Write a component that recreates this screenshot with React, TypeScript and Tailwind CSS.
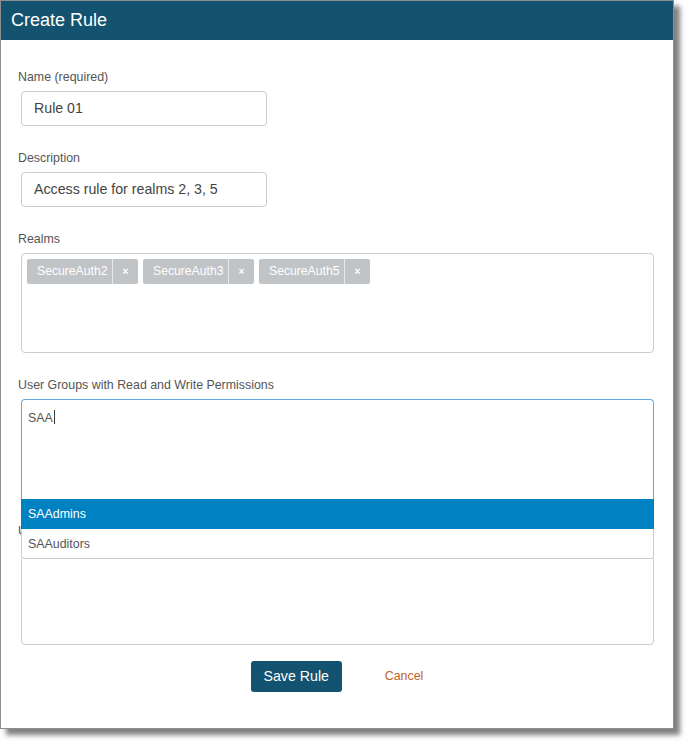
import React from 'react';

const font = { fontFamily: '"Liberation Sans", Arial, sans-serif' };

const Label: React.FC<{ text: string }> = ({ text }) => (
  <div className="h-4 pl-[17px] text-[12.4px] leading-[18px] text-[#555]">{text}</div>
);

const Tag: React.FC<{ name: string }> = ({ name }) => (
  <div className="flex h-[25px] rounded-[2px] bg-[#c0c4c7] text-white">
    <span className="flex w-[85px] items-center pl-[10px] text-[12.2px]">{name}</span>
    <span className="w-px bg-[#e6e8ea]" />
    <span className="flex w-[25px] items-center justify-center text-[10px] font-bold">×</span>
  </div>
);

export default function App() {
  return (
    <div className="h-[744px] w-[689px] bg-white" style={font}>
      <div className="flex h-[729px] w-[674px] flex-col border border-[#8f8f8f] bg-white shadow-[6px_6px_5px_rgba(0,0,0,0.5)]">
        {/* Header */}
        <div className="flex h-[39px] items-center bg-[#13536f] pl-[10px] text-[18px] text-white">
          Create Rule
        </div>

        <div className="flex flex-col pt-[28px]">
          <Label text="Name (required)" />
          <div className="ml-[20px] mt-[7px] flex h-[35px] w-[246px] items-center rounded-[4px] border border-[#ccc] pl-[12px] text-[14.2px] text-[#444]">
            Rule 01
          </div>

          <div className="mt-[23px]">
            <Label text="Description" />
          </div>
          <div className="ml-[20px] mt-[7px] flex h-[35px] w-[246px] items-center rounded-[4px] border border-[#ccc] pl-[12px] text-[14.2px] text-[#444]">
            Access rule for realms 2, 3, 5
          </div>

          <div className="mt-[23px]">
            <Label text="Realms" />
          </div>
          <div className="ml-[20px] mt-[7px] flex h-[100px] w-[633px] items-start gap-[5px] rounded-[4px] border border-[#ccc] p-[5px]">
            <Tag name="SecureAuth2" />
            <Tag name="SecureAuth3" />
            <Tag name="SecureAuth5" />
          </div>

          <div className="mt-[23px]">
            <Label text="User Groups with Read and Write Permissions" />
          </div>
          <div className="relative ml-[20px] mt-[7px] w-[633px]">
            <div className="h-[100px] rounded-t-[4px] border border-b-0 border-[#66a9e0] px-[6px] pt-[8px] text-[12.4px] text-[#555]">
              SAA<span className="ml-px inline-block h-[14px] w-px translate-y-[2px] bg-[#333]" />
            </div>
            {/* dropdown */}
            <div className="absolute left-0 top-[100px] z-10 w-[633px] bg-white text-[12.4px]">
              <div className="flex h-[30px] items-center bg-[#0081c2] pl-[7px] pt-px text-white">SAAdmins</div>
              <div className="flex h-[30px] items-center rounded-b-[3px] border border-t-0 border-[#ccc] pl-[6px] pt-px text-[#555]">
                SAAuditors
              </div>
            </div>
          </div>

          <div className="mt-[23px]">
            <Label text="User Groups with Read Permissions" />
          </div>
          <div className="ml-[20px] mt-[7px] h-[100px] w-[633px] rounded-[4px] border border-[#ccc]" />

          <div className="mt-[16px] flex items-center justify-center gap-[43px]">
            <button className="h-[31px] w-[91px] rounded-[3px] bg-[#13536f] text-[14.2px] text-white">
              Save Rule
            </button>
            <span className="text-[12.4px] text-[#c4622a]">Cancel</span>
          </div>
        </div>
      </div>
    </div>
  );
}
